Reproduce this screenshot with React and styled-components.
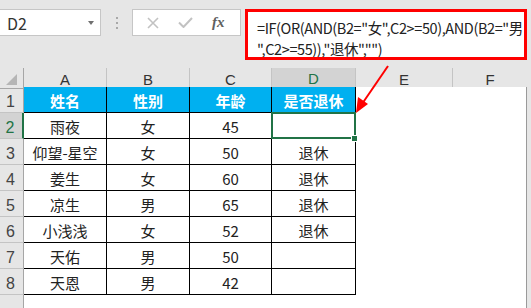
import React from 'react';
import styled, { createGlobalStyle, css } from 'styled-components';

const GlobalStyle = createGlobalStyle`
    body {
        margin: 0;
        background: #e6e6e6;
        font-family: "Noto Sans CJK SC", "Liberation Sans", sans-serif;
    }
`;

const COLS = [24, 83, 83, 82, 84, 97, 74];
const LETTERS = ['A', 'B', 'C', 'D', 'E', 'F'];

const data = [
    ['姓名', '性别', '年龄', '是否退休'],
    ['雨夜', '女', '45', ''],
    ['仰望-星空', '女', '50', '退休'],
    ['姜生', '女', '60', '退休'],
    ['凉生', '男', '65', '退休'],
    ['小浅浅', '女', '52', '退休'],
    ['天佑', '男', '50', ''],
    ['天恩', '男', '42', ''],
];

const Page = styled.div`
    position: relative;
    width: 531px;
    height: 308px;
    overflow: hidden;
    background: #e6e6e6;
`;

const Bar = styled.div`
    display: flex;
    align-items: flex-start;
    height: 68px;
    padding-top: 9px;
    box-sizing: border-box;
`;

const NameBox = styled.div`
    width: 101px;
    height: 27px;
    box-sizing: border-box;
    background: #fff;
    border: 1px solid #c6c6c6;
    border-left: none;
    display: flex;
    align-items: center;
    justify-content: space-between;
    padding: 0 6px 0 7px;
    font-size: 16px;
    color: #333;
`;

const Caret = styled.span`
    width: 0;
    height: 0;
    border-left: 3.5px solid transparent;
    border-right: 3.5px solid transparent;
    border-top: 4px solid #707070;
`;

const Dots = styled.div`
    width: 31px;
    height: 27px;
    display: flex;
    flex-direction: column;
    align-items: center;
    justify-content: center;
    gap: 3px;
    span {
        width: 2px;
        height: 2px;
        background: #a8a8a8;
    }
`;

const Buttons = styled.div`
    width: 109px;
    height: 27px;
    box-sizing: border-box;
    background: #fff;
    border: 1px solid #c6c6c6;
    display: flex;
    align-items: center;
    justify-content: space-around;
    padding: 0 6px 0 4px;
    margin-right: 4px;
`;

const Fx = styled.span`
    font-family: "Liberation Serif", serif;
    font-style: italic;
    font-weight: bold;
    font-size: 15px;
    color: #606060;
`;

const Formula = styled.div`
    width: 282px;
    height: 51px;
    box-sizing: border-box;
    background: #fff;
    border: 3px solid #ff0000;
    padding: 5px 0 0 9px;
    font-size: 14.5px;
    letter-spacing: -0.4px;
    line-height: 21px;
    color: #222;
    white-space: nowrap;
    overflow: hidden;
    span { display: block; }
`;

const Row = styled.div`
    display: grid;
    grid-template-columns: ${COLS.map(w => w + 'px').join(' ')};
    height: ${p => p.$h}px;
`;

const ColHead = styled.div`
    box-sizing: border-box;
    display: flex;
    align-items: center;
    justify-content: center;
    font-family: "Liberation Sans", sans-serif;
    font-size: 15px;
    color: #333;
    padding-top: 2px;
    border-bottom: 1px solid #a6a6a6;
    border-right: ${p => (p.$last ? 'none' : '1px solid #c4c4c4')};
    ${p => p.$corner && css`border-right: 1px solid #a6a6a6;`}
    ${p => p.$active && css`
        background: #d3d3d3;
        color: #217346;
        border-bottom: 2px solid #217346;
    `}
`;

const Corner = styled.span`
    width: 0;
    height: 0;
    border-left: 11px solid transparent;
    border-bottom: 11px solid #b5b5b5;
    margin: 0 0 0 -1px;
`;

const RowHead = styled.div`
    box-sizing: border-box;
    display: flex;
    align-items: flex-end;
    justify-content: center;
    padding: 0 2px 1px 0;
    font-family: "Liberation Sans", sans-serif;
    font-size: 16px;
    color: #444;
    border-right: 1px solid #a6a6a6;
    border-bottom: 1px solid #c4c4c4;
    ${p => p.$active && css`
        background: #d3d3d3;
        color: #217346;
        border-right: 2px solid #217346;
    `}
`;

const Cell = styled.div`
    position: relative;
    box-sizing: border-box;
    background: #fff;
    display: flex;
    align-items: center;
    justify-content: center;
    padding-top: 2px;
    font-size: 15px;
    color: #222;
    ${p => p.$table && css`
        border-right: 1px solid #000;
        border-bottom: 1px solid #000;
    `}
    ${p => p.$head && css`
        background: #00b0f0;
        color: #fff;
        font-weight: bold;
    `}
    ${p => p.$edge && css`border-right: 1px solid #9a9a9a;`}
    ${p => p.$selected && css`
        &::after {
            content: '';
            position: absolute;
            left: -1px;
            top: -1px;
            right: -1px;
            bottom: -1px;
            border: 2px solid #217346;
        }
        &::before {
            content: '';
            position: absolute;
            right: -3px;
            bottom: -4px;
            width: 5px;
            height: 5px;
            background: #217346;
            border: 1px solid #fff;
            z-index: 2;
        }
    `}
`;

const Arrow = styled.svg`
    position: absolute;
    left: 0;
    top: 0;
    pointer-events: none;
`;

function FormulaBar() {
    return (
        <Bar>
            <NameBox>
                D2
                <Caret />
            </NameBox>
            <Dots><span /><span /><span /></Dots>
            <Buttons>
                <svg width="12" height="12" viewBox="0 0 12 12">
                    <path d="M1 1 L11 11 M11 1 L1 11" stroke="#c2c2c2" strokeWidth="1.6" />
                </svg>
                <svg width="15" height="11" viewBox="0 0 15 11">
                    <path d="M1 5.5 L5.5 10 L14 1" stroke="#c2c2c2" strokeWidth="2" fill="none" />
                </svg>
                <Fx>fx</Fx>
            </Buttons>
            <Formula>
                <span>=IF(OR(AND(B2="女",C2&gt;=50),AND(B2="男</span>
                <span>",C2&gt;=55)),"退休","")</span>
            </Formula>
        </Bar>
    );
}

export default function App() {
    return (
        <Page>
            <GlobalStyle />
            <FormulaBar />
            <Row $h={19}>
                <ColHead $corner><Corner /></ColHead>
                {LETTERS.map((l, i) => (
                    <ColHead key={l} $active={l === 'D'} $last={i === LETTERS.length - 1}>{l}</ColHead>
                ))}
            </Row>
            {data.map((r, ri) => (
                <Row key={ri} $h={26}>
                    <RowHead $active={ri === 1}>{ri + 1}</RowHead>
                    {r.map((v, ci) => (
                        <Cell key={ci} $table $head={ri === 0} $selected={ri === 1 && ci === 3}>{v}</Cell>
                    ))}
                    <Cell />
                    <Cell $edge />
                </Row>
            ))}
            <Row $h={26}>
                <RowHead />
                <Cell /><Cell /><Cell /><Cell /><Cell /><Cell $edge />
            </Row>
            <Arrow width="531" height="308">
                <line x1="388" y1="66" x2="362" y2="104" stroke="#ff0000" strokeWidth="2" />
                <polygon points="356,113 358,97 368,104" fill="#ff0000" />
            </Arrow>
        </Page>
    );
}
